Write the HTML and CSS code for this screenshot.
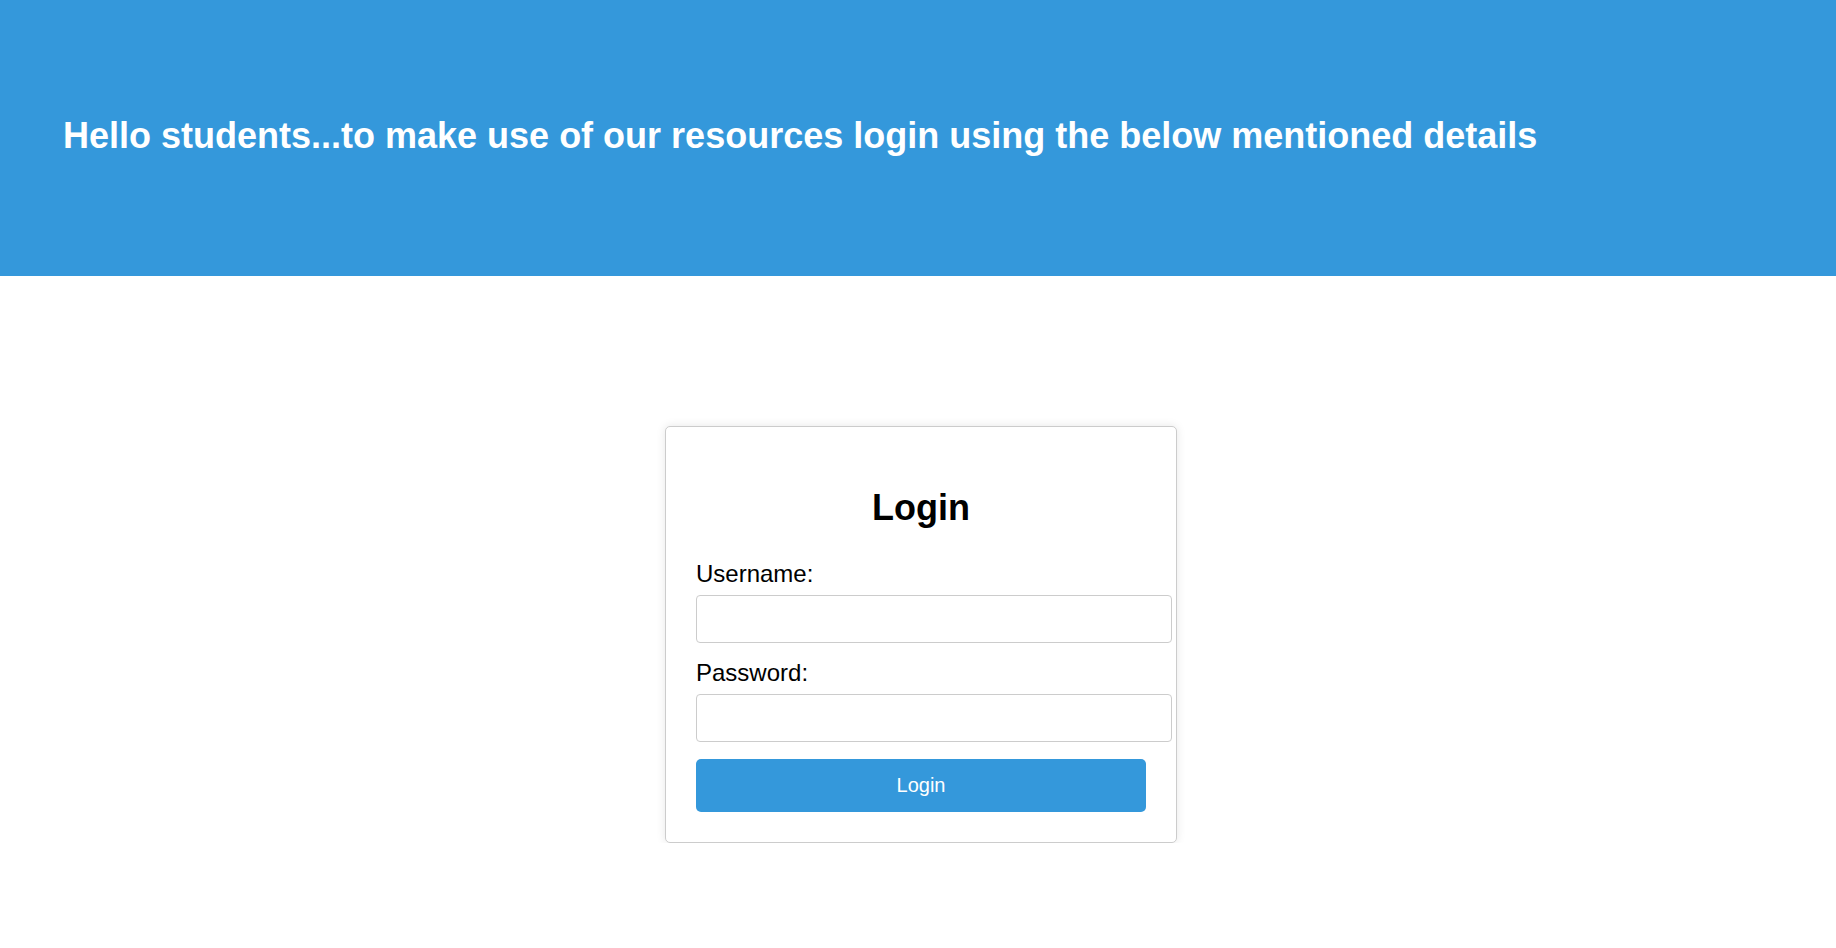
FILE: index.html
```html
<!DOCTYPE html>
<html lang="en">
<head>
<meta charset="utf-8">
<title>Student Login</title>
<link rel="stylesheet" href="styles.css">
</head>
<body>
  <header class="hero">
    <h1 class="hero-title">Hello students...to make use of our resources login using the below mentioned details</h1>
  </header>
  <main class="main">
    <div class="card">
      <h2 class="card-title">Login</h2>
      <form class="form">
        <label class="label" for="username">Username:</label>
        <input class="input" id="username" type="text">
        <label class="label" for="password">Password:</label>
        <input class="input" id="password" type="password">
        <button class="btn" type="button">Login</button>
      </form>
    </div>
  </main>
</body>
</html>
```

FILE: styles.css
```css
html, body {
  margin: 0;
  padding: 0;
  background: #ffffff;
  font-family: "Liberation Sans", Arial, sans-serif;
  color: #000;
}

.hero {
  background: #3498db;
  height: 276px;
  box-sizing: border-box;
  padding: 115px 63px 0;
}

.hero-title {
  margin: 0;
  font-size: 36px;
  font-weight: bold;
  color: #ffffff;
}

.main {
  display: flex;
  justify-content: center;
  padding-top: 150px;
  padding-left: 6px;
}

.card {
  width: 450px;
  padding: 30px;
  border: 1px solid #cccccc;
  border-radius: 5px;
  box-shadow: 0 0 10px rgba(0, 0, 0, 0.1);
  background: #fff;
}

.card-title {
  margin: 30px 0 31px;
  font-size: 36px;
  font-weight: bold;
  text-align: center;
}

.form {
  display: flex;
  flex-direction: column;
  margin: 0;
}

.label {
  display: block;
  font-size: 24px;
  margin-bottom: 7px;
}

.input {
  display: block;
  width: 100%;
  padding: 12px;
  margin: 0 0 16px;
  border: 1px solid #cccccc;
  border-radius: 4px;
  font-size: 18px;
  font-family: inherit;
  box-sizing: content-box;
  height: 22px;
}

.btn {
  margin-top: 1px;
  width: 450px;
  height: 53px;
  background: #3498db;
  color: #ffffff;
  border: none;
  border-radius: 5px;
  font-size: 20px;
  font-family: inherit;
  cursor: pointer;
}
```
